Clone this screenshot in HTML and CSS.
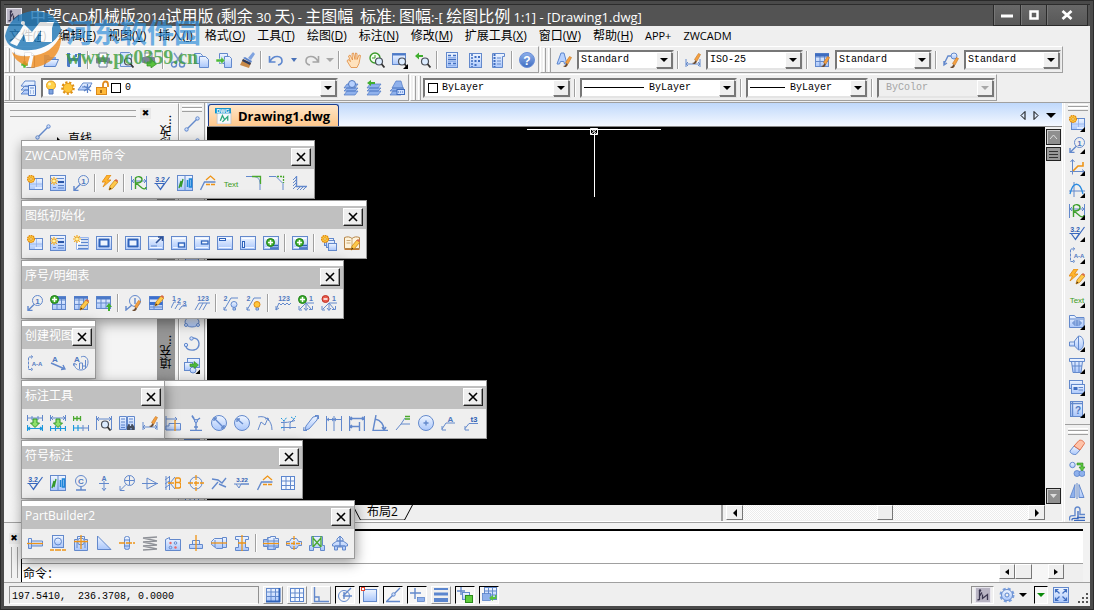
FILE: index.html
```html
<!DOCTYPE html>
<html lang="zh-CN">
<head>
<meta charset="utf-8">
<title>中望CAD机械版2014 - [Drawing1.dwg]</title>
<link rel="stylesheet" href="styles.css">
</head>
<body>
<svg class="paints" aria-hidden="true">
<linearGradient id="gb" x1="0" y1="0" x2="0" y2="1"><stop offset="0" stop-color="#f0f6ff"/><stop offset="1" stop-color="#a9c6fb"/></linearGradient>
<linearGradient id="gd" x1="0" y1="0" x2="0" y2="1"><stop offset="0" stop-color="#8fb1ec"/><stop offset="1" stop-color="#3f6dc0"/></linearGradient>
</svg>
<svg class="sprite" aria-hidden="true">
<defs>
<g id="gear"><circle cx="4" cy="4" r="3.4" fill="#ffc83c" stroke="#e08a10" stroke-width="1.4" stroke-dasharray="1.6 .6"/><circle cx="4" cy="4" r="1.3" fill="#fff0b0" stroke="#d88a10" stroke-width=".8"/></g>
<g id="burst"><path d="M4 0v8M0 4h8M1.2 1.2l5.6 5.6M6.8 1.2L1.2 6.8" stroke="#f2a81c" stroke-width="1.2"/><circle cx="4" cy="4" r="1.6" fill="#fff3a0"/></g>
<g id="pencil"><path d="M7 15l1-4 5-6 3 2-5.500 6.500z" fill="#ffc94a" stroke="#c98414" stroke-width=".8"/><path d="M7 15l1-2.500 1.500 1z" fill="#503010"/><path d="M12.500 5.500l1.500-1.500 2 1.500-1 1.500z" fill="#d86a4a"/></g>
<g id="brush"><path d="M7 13c2 0 3-1 3-3l2 1.500c-1 2.500-3 3.500-5 1.500z" fill="#6a4a30"/><path d="M9.500 9.500l4-6 2 1-3.500 6.500z" fill="#f5a040" stroke="#c27420" stroke-width=".6"/></g>
<g id="plus"><circle cx="4.500" cy="4.500" r="4" fill="#3fae2e" stroke="#1d7d17"/><path d="M4.500 2v5M2 4.500h5" stroke="#fff" stroke-width="1.500"/></g>
<g id="lens"><circle cx="10" cy="9.500" r="3.500" fill="#dcecff" stroke="#4a4f58" stroke-width="1.200"/><path d="M12.500 12l3 3.500" stroke="#333" stroke-width="1.800"/></g>
<g id="corner"><path d="M16 11.500V16h-4.500z" fill="#000"/></g>
<g id="fr"><rect x=".5" y="1.500" width="15" height="13" class="f"/><path d="M2 3.500h12M2 12.500h12" stroke="#fff" stroke-width=".8"/></g>
<g id="grid"><rect x="1.500" y="1.500" width="13" height="13" class="f"/><path d="M1.500 5h13M1.500 9.500h13M6 1.500v13M10.500 1.500v13" class="s"/></g>
</defs>
<symbol id="logo" viewBox="0 0 16 16"><rect width="16" height="16" fill="#b9b5c4"/><rect x=".5" y=".5" width="15" height="15" fill="none" stroke="#e8e6ee"/><path d="M4.500 4v8.500l-2 .5M4.500 9l2.500-3.500M7.500 7.500v4l5-4v5.500" fill="none" stroke="#3b3750" stroke-width="1.300"/><circle cx="5" cy="3.500" r="1.200" fill="#3b3750"/></symbol>
<symbol id="new" viewBox="0 0 16 16"><path d="M4.500.5h7l3 3v12h-10z" fill="#f7fbff" stroke="#8c8f9c"/><path d="M11.500.5v3h3" fill="none" stroke="#8c8f9c"/><path d="M3 9h3v2h2v3H6v2H3v-2H1v-3h2z" fill="#4cb93a" stroke="#fff" stroke-width=".5"/></symbol>
<symbol id="open" viewBox="0 0 16 16"><path d="M1 14V3h5l1 2h6v9z" fill="#7ea6e8"/><path d="M1 14.500l3-7h11.500l-3 7z" fill="url(#gb)" stroke="#5a82c8"/></symbol>
<symbol id="save" viewBox="0 0 16 16"><path d="M1 1h14v14H2l-1-1z" fill="#4b79c8"/><path d="M4 1h8v5H4zM4 9h8v6H4z" fill="#eaf2ff"/><path d="M9 2h2v3H9z" fill="#4b79c8"/></symbol>
<symbol id="print" viewBox="0 0 16 16"><path d="M4 1h8v5H4z" fill="#fff" stroke="#7f8798"/><rect x="1" y="5.500" width="14" height="6" rx="1" fill="#7b8496"/><path d="M4 9.500h8V15H4z" fill="#f4f8ff" stroke="#6d7790"/></symbol>
<symbol id="preview" viewBox="0 0 16 16"><path d="M2.500.5h9l2 2v12h-11z" fill="#d6e5ff" stroke="#6c8fd0"/><use href="#lens"/></symbol>
<symbol id="publish" viewBox="0 0 16 16"><path d="M4 1h7v4H4z" fill="#fff" stroke="#7f8798"/><rect x="1" y="5" width="13" height="6" rx="1" fill="#7b8496"/><path d="M6 10h4V7.500l5.500 4.500-5.500 4V14H6z" fill="#59c23d" stroke="#2f8c1e" stroke-width=".7"/></symbol>
<symbol id="cut" viewBox="0 0 16 16"><path d="M4 1l6 9M12 1L6 10" stroke="#7b98cc" stroke-width="1.500"/><circle cx="4" cy="12.500" r="2.500" class="s w"/><circle cx="12" cy="12.500" r="2.500" class="s w"/></symbol>
<symbol id="copy" viewBox="0 0 16 16"><path d="M1.500 1.500h6l2 2v8h-8z" class="f"/><path d="M6.500 4.500h6l3 3v8h-9z" class="f"/></symbol>
<symbol id="paste" viewBox="0 0 16 16"><path d="M3.500 1.500h8v10h-8z" class="f"/><path d="M8.500 4.500h5l2 2v9h-7z" class="f"/><path d="M0 7h5V4.500L9 8.500l-4 4V10H0z" fill="#4cb93a" stroke="#fff" stroke-width=".5"/></symbol>
<symbol id="match" viewBox="0 0 16 16"><path d="M14 0l2 2-4 6-3-2z" fill="#7fa3e0"/><path d="M4 6l2-1 7 4-1 2z" fill="#5f86cc"/><path d="M4 7l8 4-2 5-9-3z" fill="#c98a48"/><path d="M4 7l8 4-1 2-8-4z" fill="#2d3c60"/></symbol>
<symbol id="undo" viewBox="0 0 16 16"><path d="M1.500 4v6h6M2 9.500C6 2 14 4 14 9c0 2-1.500 3.500-4 4" fill="none" stroke="#5d87cf" stroke-width="1.600"/></symbol>
<symbol id="redo" viewBox="0 0 16 16"><path d="M14.500 4v6h-6M14 9.500C10 2 2 4 2 9c0 2 1.500 3.500 4 4" fill="none" stroke="#a5a5a5" stroke-width="1.600"/></symbol>
<symbol id="hand" viewBox="0 0 16 16"><path d="M5 15.500L1 9l1-1.500 2.500 2L2.500 4 4 3l2.500 5L6 1.500 7.500 1 9 7.500l.5-6.500L11 1.500v6L13 3l1.500.5-1.500 8-2 4z" fill="#ffe2bd" stroke="#e08a3c" stroke-width=".8"/></symbol>
<symbol id="zrt" viewBox="0 0 16 16"><circle cx="6" cy="6" r="5" fill="#f4fff0" stroke="#3a9a2a" stroke-width="1.400"/><path d="M6 3v3H3" fill="none" stroke="#3a9a2a"/><use href="#lens"/></symbol>
<symbol id="zwin" viewBox="0 0 16 16"><rect x=".5" y="1.500" width="13" height="11" class="f"/><path d="M.5 2.500h13" stroke="#4b79c8" stroke-width="2"/><use href="#lens"/></symbol>
<symbol id="zprev" viewBox="0 0 16 16"><path d="M0 4l4-3.500V3h4v2H4v2.500z" fill="#3fae2e"/><use href="#lens"/></symbol>
<symbol id="prop" viewBox="0 0 16 16"><rect x="2.500" y=".5" width="11" height="15" class="f"/><path d="M4 3.500h3M9 3.500h3M4 11.500h3M9 11.500h3M4 7.500h8" stroke="#3f6dc0" stroke-width="1.500"/><path d="M4 5.500h8M4 13.500h8M4 9.500h8" stroke="#8fb0ec"/></symbol>
<symbol id="dcenter" viewBox="0 0 16 16"><rect x="2.500" y="1.500" width="12" height="14" class="f"/><path d="M5 2v13" stroke="#3f6dc0" stroke-width="1.500" stroke-dasharray="2 1"/><path d="M7.500 4h2v2h-2zM11 4h2v2h-2zM7.500 8h2v2h-2zM11 8h2v2h-2zM7.500 12h2v2h-2z" fill="#3f6dc0"/></symbol>
<symbol id="palette" viewBox="0 0 16 16"><path d="M2.500 1.500h12v3h-2v11h-10z" class="f"/><path d="M4.500 2v13" stroke="#3f6dc0" stroke-width="2" stroke-dasharray="2 1"/><path d="M7 6h4M7 9h4M7 12h4" class="s"/></symbol>
<symbol id="help" viewBox="0 0 16 16"><circle cx="8" cy="8" r="7.500" fill="url(#gd)" stroke="#6c8fd8"/><text x="8" y="12.500" class="tx tw" font-size="12">?</text></symbol>
<symbol id="stext" viewBox="0 0 16 16"><path d="M1 12L5 1h3l3 11H8.500l-.7-2.500H4.500L3.500 12z" fill="#b7d1ff" stroke="#5b86cf"/><use href="#brush" y="1"/></symbol>
<symbol id="sdim" viewBox="0 0 16 16"><path d="M1 7v8M15 7v8M1 12h14M3 10l-2 2 2 2M13 10l2 2-2 2" class="s"/><use href="#brush" y="-2"/></symbol>
<symbol id="stab" viewBox="0 0 16 16"><use href="#grid"/><path d="M1 3h14" stroke="#3f6dc0" stroke-width="3"/><use href="#brush" y="1"/></symbol>
<symbol id="slead" viewBox="0 0 16 16"><circle cx="11" cy="4" r="3" class="f"/><path d="M8 4H5L1 12M1 9v4l3-2" class="s w"/><use href="#brush" y="2"/></symbol>
<symbol id="layers" viewBox="0 0 16 16"><path d="M1 6l4-5h10v4L11 7zM1 10l4-4h10L12 10zM1 14l4-4h10l-3 4z" class="f"/><path d="M8.500 5.500h7v10h-7z" fill="#e6f0ff" stroke="#4b74c0"/><path d="M10 8h4M10 11h1M13 11h1M10 13h1M13 13h1" class="s"/></symbol>
<symbol id="bulb" viewBox="0 0 16 16"><circle cx="8" cy="5.500" r="4.500" fill="#ffd24a" stroke="#e79a1b"/><path d="M6 9.500h4V14H6z" fill="#7ea3e0" stroke="#5279bd"/><circle cx="6.500" cy="4" r="1.500" fill="#fff5c0"/></symbol>
<symbol id="sun" viewBox="0 0 16 16"><circle cx="8" cy="8" r="5.500" fill="none" stroke="#dd8f12" stroke-width="2.500" stroke-dasharray="2.100 1.670"/><circle cx="8" cy="8" r="4.700" fill="#ffc63a" stroke="#e59b1a"/></symbol>
<symbol id="frz" viewBox="0 0 16 16"><path d="M1 10l5-7h9l-4 7z" class="f"/><path d="M5 7h6M10.500 4v9M7 6l7 5M14 6l-7 5" stroke="#5b82c8" stroke-width="1.200"/></symbol>
<symbol id="lock" viewBox="0 0 16 16"><path d="M9 8V4.500c0-4 5-4 5 0V7" fill="none" stroke="#e08a1c" stroke-width="1.800"/><rect x="2.500" y="7.500" width="10" height="7" fill="#ffb93a" stroke="#dc8818"/><path d="M7 10v3" stroke="#8d5406" stroke-width="1.500"/></symbol>
<symbol id="lay1" viewBox="0 0 16 16"><path d="M1 8l3-4h11l-3 4zM1 11l3-3h11l-3 3zM1 15l3-4h11l-3 4z" class="fl"/><circle cx="9" cy="4" r="3.500" fill="#b7d1ff" stroke="#5279bd"/></symbol>
<symbol id="lay2" viewBox="0 0 16 16"><path d="M1 8l3-4h11l-3 4zM1 11l3-3h11l-3 3zM1 15l3-4h11l-3 4z" class="fl"/><path d="M1 3l4-3v2h4v2H5v2z" fill="#3fae2e"/></symbol>
<symbol id="lay3" viewBox="0 0 16 16"><path d="M3 8l4-7h5l2 7zM1 11l3-3h11l-3 3zM1 15l3-4h11l-3 4z" class="fl"/><rect x="8" y="9.500" width="7.500" height="5" fill="#cfe0ff" stroke="#3f6dc0"/><path d="M9 12h5" stroke="#3f6dc0" stroke-dasharray="1 1"/></symbol>
<symbol id="dwg" viewBox="0 0 16 16"><path d="M2 2h10l3 3v11H2z" fill="#f5f8fc" stroke="#b8c1ce" stroke-width=".7"/><path d="M5 13l2-5 2 4 3-3v4M7 14l4-4" fill="none" stroke="#2aa87c" stroke-width="1.200"/><rect y="1" width="15" height="5" fill="#0e91cb"/><text x="7.500" y="5.400" class="tx tw" font-size="5">DWG</text></symbol>
<symbol id="line" viewBox="0 0 16 16"><path d="M3 13L13 3" class="s w"/><circle cx="2.500" cy="13.500" r="1.700" class="f"/><circle cx="13.500" cy="2.500" r="1.700" class="f"/></symbol>
<symbol id="ellipse" viewBox="0 0 16 16"><ellipse cx="8" cy="8" rx="7" ry="5" class="f"/><circle cx="2" cy="11" r="1.500" class="f"/><circle cx="14" cy="11" r="1.500" class="f"/></symbol>
<symbol id="arc" viewBox="0 0 16 16"><path d="M8 2c9-1 9 11 2 12-4 .5-7-1-8-3" class="s w"/><circle cx="7.500" cy="2.500" r="1.700" class="f"/><circle cx="2" cy="9" r="1.700" class="f"/></symbol>
<symbol id="insert" viewBox="0 0 16 16"><rect x="3.500" y=".5" width="12" height="9" class="f"/><rect x=".5" y="4.500" width="8" height="8" class="f"/><circle cx="9" cy="12" r="3" class="f"/><path d="M6 6h4V3.500l4.500 3.500-4.500 3.500V8.500H6z" fill="#4cb93a" stroke="#2f8c1e" stroke-width=".6"/><use href="#corner"/></symbol>
<symbol id="sheetgear" viewBox="0 0 16 16"><rect x="2.500" y="3.500" width="13" height="11" class="f"/><path d="M9.500 4v10M3 9h12" stroke="#8fb0ec" stroke-width=".8"/><path d="M8 12h7v2H8z" fill="#dfeaff"/><use href="#gear"/></symbol>
<symbol id="sheetsun" viewBox="0 0 16 16"><rect x=".5" y=".5" width="15" height="15" class="f"/><path d="M7 3.500h7M3 12.500h3" class="s"/><path d="M8 7h6" stroke="#2b56a8" stroke-width="2"/><path d="M8 10.500h6M8 13h6" stroke="#5b82c8" stroke-width="1.200"/><use href="#burst" y="2"/></symbol>
<symbol id="listsun" viewBox="0 0 16 16"><path d="M3.500 2.500h12v12h-12z" fill="#fff" stroke="#9bb8ee"/><path d="M8 4.500h7M8 7.500h7M5 10.500h10M5 13.500h10" stroke="#5b86cf" stroke-width="1.400"/><use href="#burst"/></symbol>
<symbol id="balloon" viewBox="0 0 16 16"><circle cx="10.500" cy="5.500" r="5" class="s"/><text x="10.500" y="8.500" class="tx" font-size="8">1</text><path d="M7 9.500L1.500 15M1 11v4.500h4.500" class="s w"/></symbol>
<symbol id="bolt" viewBox="0 0 16 16"><path d="M5 0L0 7h3.500L1 12l8-7H5.500L9 0z" fill="#ffb52e" stroke="#df8610" stroke-width=".8"/><use href="#pencil"/></symbol>
<symbol id="fit" viewBox="0 0 16 16"><path d="M.5 1v14M15.500 1v14M1 6h14M3 4L1 6l2 2M13 4l2 2-2 2" class="s"/><path d="M4.500 14V3C6 1 11 1 11 4.500S6 8 5 8l6 5c2 1.500 4 1 4-1" fill="none" stroke="#3fa02e" stroke-width="1.400"/></symbol>
<symbol id="rough" viewBox="0 0 16 16"><text x="6" y="6.500" class="tx td" font-size="7">3.2</text><path d="M.5 8.500h10M2.500 9l4 5.500L15.500 2M6.500 14L10 9" fill="none" stroke="#3a68bd" stroke-width="1.200"/></symbol>
<symbol id="hatch" viewBox="0 0 16 16"><rect x=".5" y=".5" width="15" height="15" class="f"/><path d="M8 1v14" class="s"/><path d="M2 13l2-7v6l2-8" fill="none" stroke="#35992b" stroke-width="1.300"/><path d="M10.500 5v7M12.500 4h2v8h-2z" fill="none" stroke="#1f86d8" stroke-width="1.500"/></symbol>
<symbol id="weld" viewBox="0 0 16 16"><path d="M.5 15l4-8h11" class="s w"/><path d="M6 5l4.500-4L15 5" class="o"/><path d="M6 9.500h4M11 9.500h4" class="o"/></symbol>
<symbol id="text" viewBox="0 0 16 16"><text x="8" y="11.500" font-size="8" class="tg">Text</text></symbol>
<symbol id="fillet" viewBox="0 0 16 16"><path d="M0 1.500h7c5 0 7 3 7 7V15" class="s"/><path d="M6 1.500h8.500V9" class="g"/></symbol>
<symbol id="chamfer" viewBox="0 0 16 16"><path d="M0 1.500h7l7 7V15" class="s"/><path d="M8 1.500h6.500V8" class="g" stroke-dasharray="2 1"/></symbol>
<symbol id="slot" viewBox="0 0 16 16"><path d="M4.500 1v10.500H15" class="s w"/><path d="M1 5l3-3M1 8l3-3M1 11l3-3M1 14l3-3M5 15l3-3M8 15l3-3M11 15l3-3" class="s"/></symbol>
<symbol id="frame" viewBox="0 0 16 16"><use href="#fr"/><rect x="3.500" y="4.500" width="9" height="7" fill="#eef5ff" stroke="#2f63bb" stroke-width="2"/></symbol>
<symbol id="framearrow" viewBox="0 0 16 16"><use href="#fr"/><path d="M8 8l6-6M10 2h4.500v4" fill="none" stroke="#2f5296" stroke-width="1.600"/><path d="M3 11h6" class="s"/></symbol>
<symbol id="framebr" viewBox="0 0 16 16"><use href="#fr"/><rect x="7.500" y="8" width="6" height="4" fill="#f2f7ff" stroke="#2f63bb" stroke-width="1.400"/></symbol>
<symbol id="framer" viewBox="0 0 16 16"><use href="#fr"/><rect x="7.500" y="6" width="6.500" height="3" fill="#f2f7ff" stroke="#2f63bb" stroke-width="1.300"/></symbol>
<symbol id="frametl" viewBox="0 0 16 16"><use href="#fr"/><rect x="2.500" y="3.500" width="6" height="2" fill="#f2f7ff" stroke="#2f63bb"/></symbol>
<symbol id="framel" viewBox="0 0 16 16"><use href="#fr"/><rect x="2.500" y="6.500" width="2" height="6" fill="#f2f7ff" stroke="#2f63bb"/></symbol>
<symbol id="frameplus" viewBox="0 0 16 16"><use href="#fr"/><path d="M7 10.500h8M7 13h8" stroke="#2f63bb" stroke-width="1.500"/><use href="#plus" x="3" y="3"/></symbol>
<symbol id="sheets" viewBox="0 0 16 16"><rect x="3.500" y="3.500" width="9" height="7" class="f"/><rect x="5.500" y="5.500" width="8" height="7" class="f"/><rect x="7.500" y="8.500" width="8" height="7" class="f"/><use href="#gear"/></symbol>
<symbol id="book" viewBox="0 0 16 16"><path d="M.5 2.500c3-1 5-1 7.500 1 2.500-2 4.500-2 7.500-1v11H.5z" fill="#fdf3dc" stroke="#b68446"/><path d="M8 3v10M2.500 5.500h4M2.500 8h4" stroke="#c8a878"/><path d="M.5 14.500h15" stroke="#c17a35"/><use href="#pencil"/></symbol>
<symbol id="tabplus" viewBox="0 0 16 16"><use href="#grid" x="1" y="0"/><path d="M2 3h14" stroke="#4b79c8" stroke-width="2.500"/><use href="#plus" y="0"/></symbol>
<symbol id="tabpen" viewBox="0 0 16 16"><use href="#grid"/><path d="M1 2.500h14" stroke="#4b79c8" stroke-width="2.500"/><use href="#pencil"/></symbol>
<symbol id="tabup" viewBox="0 0 16 16"><rect x=".5" y="1.500" width="14" height="12" class="f"/><path d="M.5 3h14" stroke="#4b79c8" stroke-width="3"/><path d="M.5 8h14M5 4v9M10 4v9" class="s"/><path d="M10 12l3-4 3 4h-2v4h-2v-4z" fill="#3fae2e"/></symbol>
<symbol id="balbrush" viewBox="0 0 16 16"><circle cx="10" cy="6" r="5.500" class="s"/><path d="M10 3v6M7 10L1 15v-4" class="s w"/><use href="#brush" y="2"/></symbol>
<symbol id="tabpen2" viewBox="0 0 16 16"><rect x="1.500" y="1.500" width="13" height="13" class="f"/><path d="M1.500 3h13M1.500 8.500h13" stroke="#3a6fce" stroke-width="3"/><path d="M1.500 12h13M6 10v4" class="s"/><use href="#pencil" y="-4"/></symbol>
<symbol id="n123a" viewBox="0 0 16 16"><text x="3" y="5.500" class="tx" font-size="7">1</text><text x="8" y="8" class="tx" font-size="7">2</text><text x="13.500" y="11" class="tx" font-size="7">3</text><path d="M0 13l3-6h2M4 14l3-5h3M8 15l3-4h5" class="s"/></symbol>
<symbol id="n123b" viewBox="0 0 16 16"><text x="9" y="6" class="tx" font-size="7">123</text><path d="M1 15l4-7h11M5 15l4-7M9 15l4-7" class="s"/></symbol>
<symbol id="bulboff" viewBox="0 0 16 16"><text x="2.500" y="6" class="tx" font-size="7">2</text><path d="M1 15L8 3h7M1 12v3h3" class="s"/><circle cx="11" cy="9.500" r="3" class="f"/><path d="M10 13h2.500v2H10z" class="f"/></symbol>
<symbol id="bulbon" viewBox="0 0 16 16"><text x="2.500" y="6" class="tx" font-size="7">2</text><path d="M1 15L8 3h7M1 12v3h3" class="s"/><circle cx="11" cy="9.500" r="3" fill="#ffc63a" stroke="#de8a14"/><path d="M10 13h2.500v2H10z" class="f"/></symbol>
<symbol id="n123z" viewBox="0 0 16 16"><text x="9" y="6" class="tx" font-size="7">123</text><path d="M1 15L4 8l2 2 2-2 2 2 2-2 2 2 2-2M1 11v4l3-2" class="s"/></symbol>
<symbol id="plus1" viewBox="0 0 16 16"><text x="13" y="6" class="tx" font-size="7">1</text><path d="M8 8h8M8 8l-6 6M8 8v7M8 8l5 6M1 11v4h3M6 13l2 2.500 2-2.500M11 14.500h3.500V11" class="s"/><use href="#plus"/></symbol>
<symbol id="minus1" viewBox="0 0 16 16"><text x="13" y="6" class="tx" font-size="7">1</text><path d="M8 8h8M8 8l-6 6M8 8v7M8 8l5 6M1 11v4h3M6 13l2 2.500 2-2.500M11 14.500h3.500V11" class="s"/><circle cx="4.500" cy="4" r="3.500" fill="#e85a4a" stroke="#c03226"/><path d="M2.500 4h4" stroke="#fff" stroke-width="1.500"/></symbol>
<symbol id="aa" viewBox="0 0 16 16"><path d="M5 2H1.500v12.500H5M4 .5L6 2 4 3.500M4 13l2 1.500L4 16" class="s" stroke-dasharray="3 1"/><text x="10" y="10.500" class="tx" font-size="6">A-A</text></symbol>
<symbol id="aview" viewBox="0 0 16 16"><text x="5" y="7" class="tx" font-size="8">A</text><path d="M1 8l14 6M11 14.500l4-.5-2-4" class="s w"/></symbol>
<symbol id="arot" viewBox="0 0 16 16"><text x="4" y="7" class="tx" font-size="8">A</text><path d="M8 2c4-2 7 1 7 5 0 5-3 8-7 8-4 0-6-2-7-6M0 11l1-3 3 2" class="s"/><path d="M6.500 14V8h3v6M9.500 11h3V5M12.500 6v7" class="s"/></symbol>
<symbol id="dimdown" viewBox="0 0 16 16"><path d="M.5 0v6M15.500 0v6M5 1v4M11 1v4M.5 3h15" class="s"/><path d="M.5 10v6M15.500 10v6M.5 13.500h15M3 12l-2 1.500L3 15M13 12l2 1.500-2 1.500" fill="none" stroke="#1b97dd" stroke-width="1.200"/><path d="M6 4h4v4h2.500L8 12.500 3.500 8H6z" fill="#8fe06a" stroke="#32962a"/></symbol>
<symbol id="dimdown2" viewBox="0 0 16 16"><path d="M.5 0v6M15.500 0v6M.5 3h15M3 1L1 3l2 2M13 1l2 2-2 2" class="s"/><path d="M.5 11v5M5.500 11v5M10.500 11v5M15.500 11v5M.5 13.500h15" fill="none" stroke="#1b97dd" stroke-width="1.200"/><path d="M6 4h4v4h2.500L8 12.500 3.500 8H6z" fill="#8fe06a" stroke="#32962a"/></symbol>
<symbol id="dimgrn" viewBox="0 0 16 16"><path d="M.5 1v5M4 1v5M7.500 1v5M.5 3.500h7" class="g"/><path d="M.5 10v6M5 10v6M.5 13h8" fill="none" stroke="#1b97dd" stroke-width="1.200"/><path d="M15.500 10v6M10 10v6M8 13h7" class="s"/></symbol>
<symbol id="dimlens" viewBox="0 0 16 16"><path d="M.5 1v14M15.500 1v14M1 4h14M3 2L1 4l2 2M13 2l2 2-2 2" class="s"/><use href="#lens" x="-1"/></symbol>
<symbol id="bookfind" viewBox="0 0 16 16"><path d="M.5 1.500h7v13h-7zM8.500 1.500h7v13h-7z" class="f"/><path d="M2 4h4M2 7h4M2 10h4M2 12.500h4M10 4h4M10 7h4" stroke="#5b82c8"/><path d="M8 15v-3l1.500-3h1l.5 2h1l.5-2h1l2 3v3h-3v-2h-1v2z" fill="#444c5c"/></symbol>
<symbol id="dimblock" viewBox="0 0 16 16"><path d="M1 15V1M1 4h11M10 2l2 2-2 2" class="s"/><path d="M4 8.500h11.500V15H1v-4h3z" class="f"/><path d="M10 5v11" class="o"/></symbol>
<symbol id="datum" viewBox="0 0 16 16"><path d="M2 15.500h12M8 15V7L4 1M4 .5l2 3M8 6l4-3M6 12h4" class="s w"/><circle cx="8" cy="6" r="1.500" class="f"/></symbol>
<symbol id="diam" viewBox="0 0 16 16"><circle cx="8" cy="8" r="7.500" class="f"/><path d="M3 3l10 10M3 6V3h3M13 10v3h-3" class="s w"/></symbol>
<symbol id="radius" viewBox="0 0 16 16"><circle cx="8" cy="8" r="7.500" class="f"/><path d="M3 4l6 5M3 7V4h3" class="s w"/></symbol>
<symbol id="jog" viewBox="0 0 16 16"><path d="M1 2c8-2 14 4 14 13M1 15l3-8 4 3 3-7M8 4l3-1 1 3" class="s"/></symbol>
<symbol id="ord" viewBox="0 0 16 16"><path d="M4 16V5M1 12.500h15M1 7.500c5 0 8 0 14-2M10 14V8l4-4" class="s"/><path d="M1 3l3 3 3-4M11 2l3 2 2-3M1 13l3-1" fill="none" stroke="#1b97dd" stroke-dasharray="2 1"/></symbol>
<symbol id="align" viewBox="0 0 16 16"><path d="M3 11l7-9 5-1-1 4-8 9-4 1z" class="f"/><path d="M1 12l-.5 3.500H4M12 .5h3.500V4" class="s"/></symbol>
<symbol id="cont" viewBox="0 0 16 16"><path d="M.5 1v15M8 1v15M15.500 1v15M1 4.500h15M3 3L1 4.500 3 6M6 3l2 1.500L6 6M10 3L8 4.500 10 6" class="s"/></symbol>
<symbol id="base" viewBox="0 0 16 16"><path d="M.5 1v15M15.500 1v15M10.500 7v9M1 3.500h14M1 11.500h9M3 2L1 3.500 3 5M13 2l2 1.500L13 5M3 10l-2 1.500L3 13" class="s w"/></symbol>
<symbol id="angle" viewBox="0 0 16 16"><path d="M4 0L1 15.500h15M3 4c6 1 9 6 9 11M10 12l2 3 2-3" class="s w"/></symbol>
<symbol id="leadg" viewBox="0 0 16 16"><path d="M1 15l5-6h9M6 9l4-6" class="s"/><path d="M10 1.500h5M10 4h5" class="g"/></symbol>
<symbol id="cmark" viewBox="0 0 16 16"><circle cx="8" cy="8" r="7.500" class="f"/><path d="M8 5.500v5M5.500 8h5" class="s w"/></symbol>
<symbol id="leada" viewBox="0 0 16 16"><text x="9.500" y="6.500" class="tx" font-size="8">A</text><path d="M14 8H5l-4 6M1 11v4h4" class="s"/></symbol>
<symbol id="leadt" viewBox="0 0 16 16"><text x="10" y="6.500" class="tx td" font-size="8">t3</text><path d="M14 8.500H5l-4 5M1 11v4h4" class="s"/></symbol>
<symbol id="cdatum" viewBox="0 0 16 16"><circle cx="8" cy="6" r="5.500" class="s"/><text x="8" y="9" class="tx" font-size="8">C</text><path d="M8 11.500V15M3 15h10" class="s w"/></symbol>
<symbol id="acenter" viewBox="0 0 16 16"><text x="8" y="6" class="tx" font-size="7">A</text><path d="M3 8.500h10M8 6v9.500M6 13l2 2.500 2-2.500" class="s"/></symbol>
<symbol id="baltarget" viewBox="0 0 16 16"><circle cx="10.500" cy="5.500" r="5" class="s"/><path d="M10.500 1v9M5.500 5.500h10M7 9.500L1.500 15M1 11v4.500h4.500" class="s"/></symbol>
<symbol id="taper" viewBox="0 0 16 16"><path d="M0 8.500h16M5 3v11l10-5.500z" class="s"/></symbol>
<symbol id="kb" viewBox="0 0 16 16"><path d="M1 1v14M4.500 1v14M0 5l4-3M0 9l4-3M0 13l4-3M10 2L5 8l5 6" class="s"/><path d="M10.500 3H14c2 0 2 4.500 0 4.500h-3.500M14 7.500c2.500 0 2.500 5.500 0 5.500h-3.500V3M3 8h6" class="o"/></symbol>
<symbol id="target" viewBox="0 0 16 16"><circle cx="8" cy="8" r="6" class="s"/><path d="M8 0v16M0 8h16" class="o" stroke-dasharray="5 1"/></symbol>
<symbol id="rod" viewBox="0 0 16 16"><path d="M1 4l6 1 4 3 4-5M1 14l6-7M8 9l7 3" class="s w"/></symbol>
<symbol id="n322" viewBox="0 0 16 16"><text x="8" y="7" class="tx td" font-size="6">3.22</text><path d="M0 9h15M2 9l3 4 2-4h8" class="s"/></symbol>
<symbol id="gridb" viewBox="0 0 16 16"><rect x="1.500" y="1.500" width="13" height="13" fill="#f4f8ff" stroke="#5b86cf"/><path d="M1.500 6h13M1.500 10.500h13M6 1.500v13M10.500 1.500v13" class="s"/></symbol>
<symbol id="bolt2" viewBox="0 0 16 16"><path d="M1.500 3.500h3v10h-3zM4.500 6h11v5h-11z" class="f"/><path d="M0 8.500h16" class="o"/></symbol>
<symbol id="bearing" viewBox="0 0 16 16"><rect x="2.500" y=".5" width="11" height="12" class="f"/><circle cx="8" cy="6.500" r="3.500" class="f"/><path d="M0 15h4M5 15h6M12 15h4" class="o"/></symbol>
<symbol id="bush" viewBox="0 0 16 16"><path d="M1.500 4.500h3v-3h7v3h3v11h-13z" class="f"/><path d="M4 6v7M12 6v7" class="s"/><circle cx="8" cy="6.500" r="3.500" class="s"/><path d="M8 0v14M1 6.500h14" class="o"/></symbol>
<symbol id="tri" viewBox="0 0 16 16"><path d="M1.500 1v13.500H15z" class="f"/></symbol>
<symbol id="washer" viewBox="0 0 16 16"><rect x="5.500" y="1.500" width="5" height="13" rx="2" class="f"/><path d="M5 5h6M5 11h6" class="s"/><path d="M0 8h16" class="o" stroke-dasharray="6 1"/></symbol>
<symbol id="spring" viewBox="0 0 16 16"><path d="M1 3l14-1M1 3l14 3M1 7l14-1M1 7l14 3M1 11l14-1M1 11l14 3M1 15l14-1" stroke="#8f9298" stroke-width="1.400"/></symbol>
<symbol id="steel" viewBox="0 0 16 16"><path d="M.5 4.500l4-2v2h11v11H.5z" class="f"/><circle cx="5.500" cy="8" r="1.200" fill="#e66"/><circle cx="10.500" cy="8" r="1.300" class="s"/><circle cx="5.500" cy="12.500" r="1.300" class="s"/><circle cx="10.500" cy="12.500" r="1.200" fill="#e66"/></symbol>
<symbol id="nut" viewBox="0 0 16 16"><path d="M4.500 5.500h7v4h-7zM1.500 9.500h13v4h-13z" class="f"/><path d="M8 0v16" class="o"/></symbol>
<symbol id="plug" viewBox="0 0 16 16"><path d="M.5 6.500l3-3h8v-1h4v10h-4v1h-6l-5-4z" class="f"/><path d="M4 5v7M11.500 3v10" class="s"/><path d="M0 8h16" class="o"/></symbol>
<symbol id="ibeam" viewBox="0 0 16 16"><path d="M1.500 1.500h13v3h-3v8h3v3h-13v-3h3v-8h-3z" class="f"/><path d="M8 0v16M4 8h8" class="o"/></symbol>
<symbol id="flange" viewBox="0 0 16 16"><path d="M.5 4.500h4v-2h3v-1h5v2h3v9h-3v2h-8v-3h-4z" class="f"/><path d="M5 3v11M11 3v11M1 6h14M1 11h14" class="s"/><path d="M0 8.500h16" class="o"/></symbol>
<symbol id="gearbox" viewBox="0 0 16 16"><path d="M.5 6.500h3l2-3h5l2 3h3v4h-3l-2 3h-5l-2-3h-3z" class="f"/><path d="M8 1v14M0 8.500h16" class="o" stroke-dasharray="4 1"/></symbol>
<symbol id="green" viewBox="0 0 16 16"><path d="M2.500 1.500h11v9h2v5h-4v-3h-7v3h-4v-5h2z" class="f"/><path d="M4 3l8 9M12 3l-8 9M4 1v11M12 1v11" class="g"/></symbol>
<symbol id="hub" viewBox="0 0 16 16"><path d="M5 4l3-3 3 3v2l4.500 3v2h-2v4h-3v-3h-5v3h-3v-4H.5V9L5 6z" class="f"/><path d="M8 1v11M5 6h6M3 11h10" class="s w"/></symbol>
<symbol id="axis" viewBox="0 0 16 16"><path d="M3.500 1v14.500M1 12.500h14M1.500 3l2-2.500 2 2.500M13 10.500l2.500 2-2.500 2" class="s"/><path d="M4 12l5-5h5V3" fill="none" stroke="#ee9416" stroke-width="1.600"/></symbol>
<symbol id="curve" viewBox="0 0 16 16"><path d="M5 1v15M0 10h16" class="s"/><path d="M1 13C4 0 11 0 14 13" fill="none" stroke="#2b8be0" stroke-width="1.300"/></symbol>
<symbol id="folder" viewBox="0 0 16 16"><path d="M.5 14.500v-12h5l1.500 2h8v10z" class="f"/><path d="M.5 6h14M3 10h10M5 8v4h6V8H5M8 7v6" class="s"/></symbol>
<symbol id="cap" viewBox="0 0 16 16"><path d="M.5 7h5v4h-5z" class="f"/><path d="M5.500 6l4-5c4 0 5 4 5 7s-1 7-5 7l-4-4z" class="f"/><path d="M9.500 1v14" class="s"/></symbol>
<symbol id="bin" viewBox="0 0 16 16"><path d="M2.500 4.500h11l-1.500 11H4zM.5 1.500h15v3H.5z" class="f"/><path d="M6 5v10M10 5v10M3 9h10" class="s"/></symbol>
<symbol id="cards" viewBox="0 0 16 16"><rect x=".5" y="1.500" width="13" height="8" class="f"/><rect x="2.500" y="5.500" width="13" height="9" class="f"/><path d="M4.500 8h4v3h-4z" fill="#3f6dc0"/><path d="M9.500 8.500h4.500M9.500 11h4.500" class="s"/></symbol>
<symbol id="manual" viewBox="0 0 16 16"><rect x="1.500" y=".5" width="12" height="15" class="f"/><path d="M3.500 1v14M1.500 2.500h12" class="s w"/><text x="9" y="12.500" class="tx" font-size="10">?</text></symbol>
<symbol id="eraser" viewBox="0 0 16 16"><path d="M1 12l4-5 6 4-4 4.500c-2 .5-6-1-6-3.500z" class="f"/><path d="M5 7l5-5.500c2-1 5 .5 5.500 3L11 11z" fill="#ffc2a8" stroke="#e0704c"/></symbol>
<symbol id="cpy2" viewBox="0 0 16 16"><circle cx="3.500" cy="4" r="2.700" class="f"/><circle cx="8" cy="12.500" r="3" class="fl"/><circle cx="13" cy="12.500" r="3" class="fl"/><path d="M8 2h6v4h2l-3 4-3-4h2V4H8z" fill="#5cc63f" stroke="#2f8c1e" stroke-width=".6"/></symbol>
<symbol id="mirror" viewBox="0 0 16 16"><path d="M6 1.500v13H1z" class="fl"/><path d="M10 1.500v13h5z" class="f"/><path d="M8 0v16" class="s"/></symbol>
<symbol id="offset" viewBox="0 0 16 16"><path d="M.5 15.500v-2c0-3 2-3 5.500-3V5c0-4 5-4 5 0v4.500h5" class="s w"/><path d="M3 15.500v-1c0-1.500 2-1 6-1V6M16 12.500H8M16 15.500H5" stroke="#3a68bd" fill="none" stroke-width="1.300"/></symbol>
<symbol id="grid2" viewBox="0 0 16 16"><use href="#grid"/><path d="M14.500 1v14" stroke="#2f63bb" stroke-width="2"/><path d="M1 14.500h14" stroke="#2f63bb" stroke-width="2"/></symbol>
<symbol id="ortho" viewBox="0 0 16 16"><path d="M1.500 0v14.500H16M2 10h4v4" class="s w"/></symbol>
<symbol id="polar" viewBox="0 0 16 16"><circle cx="7" cy="9" r="5.500" class="s"/><path d="M6 9h9M6 9l8-8M7 5v7" class="s w"/></symbol>
<symbol id="osnap" viewBox="0 0 16 16"><rect x="2.500" y="2.500" width="13" height="12" class="f"/><rect x=".5" y=".5" width="3" height="3" fill="#fff" stroke="#e8432f"/></symbol>
<symbol id="otrack" viewBox="0 0 16 16"><path d="M1 14.500h14M2 14L15 1" class="s w"/><circle cx="8.500" cy="7.500" r="1.700" class="f"/></symbol>
<symbol id="dyn" viewBox="0 0 16 16"><path d="M6 1v11M1 6h11" class="s w"/><rect x="8.500" y="10.500" width="7" height="4" class="fl"/></symbol>
<symbol id="lwt" viewBox="0 0 16 16"><path d="M1 2h14" stroke="#5b86cf" stroke-width="2"/><path d="M1 7h14" stroke="#5b86cf" stroke-width="3"/><path d="M1 13h14" stroke="#5b86cf" stroke-width="4"/></symbol>
<symbol id="cycle" viewBox="0 0 16 16"><path d="M4 0v8M0 4h8" class="s w"/><rect x="5.500" y="5.500" width="7" height="7" class="f"/><rect x="8.500" y="8.500" width="7" height="7" fill="#5fcc3e" stroke="#2b8a1d"/></symbol>
<symbol id="model" viewBox="0 0 16 16"><rect x="3.500" y=".5" width="12" height="12" class="f"/><path d="M3.500 4h12M7.500.5v12M11.500.5v12M3.500 8h12" class="s"/><rect x="1.500" y="6.500" width="8" height="7" class="fl"/><path d="M15.500 8v4H12v2l-4-3 4-3v2h2V8z" fill="#59c23d"/></symbol>
<symbol id="cog" viewBox="0 0 16 16"><circle cx="8" cy="8" r="6.500" fill="none" stroke="#7ba0de" stroke-width="2" stroke-dasharray="3 2.100"/><circle cx="8" cy="8" r="5.500" class="f"/><circle cx="8" cy="8" r="2" fill="#efefef" stroke="#5b86cf"/></symbol>
<symbol id="full" viewBox="0 0 16 16"><rect x=".5" y=".5" width="15" height="15" class="f"/><path d="M2.500 2.500l4 4M13.500 2.500l-4 4M2.500 13.500l4-4M13.500 13.500l-4-4M2.500 5.500v-3h3M10.500 2.500h3v3M2.500 10.500v3h3M10.500 13.500h3v-3" fill="none" stroke="#3f6dc0" stroke-width="1.200"/></symbol>
</svg>

<div class="window">
  <header class="titlebar">
    <svg class="ic"><use href="#logo"/></svg>
    <h1>中望<span>CAD</span>机械版<span>2014</span>试用版<span> (</span>剩余<span> 30 </span>天<span>) - </span>主图幅<span>&nbsp; </span>标准<span>: </span>图幅<span>:-[ </span>绘图比例<span> 1:1] - [Drawing1.dwg]</span></h1>
    <div class="winbtns">
      <button aria-label="Minimize"><svg viewBox="0 0 14 12"><path d="M1 5.500h12v3H1z" fill="#fff"/></svg></button>
      <button aria-label="Maximize"><svg viewBox="0 0 14 12"><path d="M3.500 2.500h7v7h-7z" fill="none" stroke="#fff" stroke-width="2.500"/></svg></button>
      <button class="wclose" aria-label="Close"><svg viewBox="0 0 14 12"><path d="M2.500 2l9 8M11.500 2l-9 8" stroke="#fff" stroke-width="2.800"/></svg></button>
    </div>
  </header>

  <nav class="menu">
    <button>文件(<u>F</u>)</button><button>编辑(<u>E</u>)</button><button>视图(<u>V</u>)</button><button>插入(<u>I</u>)</button><button>格式(<u>O</u>)</button><button>工具(<u>T</u>)</button><button>绘图(<u>D</u>)</button><button>标注(<u>N</u>)</button><button>修改(<u>M</u>)</button><button>扩展工具(<u>X</u>)</button><button>窗口(<u>W</u>)</button><button>帮助(<u>H</u>)</button><button class="en">APP+</button><button class="en">ZWCADM</button>
  </nav>

  <div class="barrow">
    <div class="bar">
      <i class="grip"></i>
      <button class="t" aria-label="New"><svg><use href="#new"/></svg></button>
      <button class="t" aria-label="Open"><svg><use href="#open"/></svg></button>
      <button class="t" aria-label="Save"><svg><use href="#save"/></svg></button>
      <i class="sep"></i>
      <button class="t" aria-label="Print"><svg><use href="#print"/></svg></button>
      <button class="t" aria-label="Preview"><svg><use href="#preview"/></svg></button>
      <button class="t" aria-label="Publish"><svg><use href="#publish"/></svg></button>
      <i class="sep"></i>
      <button class="t" aria-label="Cut"><svg><use href="#cut"/></svg></button>
      <button class="t" aria-label="Copy"><svg><use href="#copy"/></svg></button>
      <button class="t" aria-label="Paste"><svg><use href="#paste"/></svg></button>
      <button class="t" aria-label="Match properties"><svg><use href="#match"/></svg></button>
      <i class="sep"></i>
      <button class="t" aria-label="Undo"><svg><use href="#undo"/></svg></button>
      <button class="drop" aria-label="Undo list"><i class="down blue"></i></button>
      <button class="t" aria-label="Redo"><svg><use href="#redo"/></svg></button>
      <button class="drop" aria-label="Redo list"><i class="down gray"></i></button>
      <i class="sep"></i>
      <button class="t" aria-label="Pan"><svg><use href="#hand"/></svg></button>
      <button class="t" aria-label="Zoom realtime"><svg><use href="#zrt"/></svg></button>
      <button class="t more" aria-label="Zoom window"><svg><use href="#zwin"/></svg></button>
      <button class="t" aria-label="Zoom previous"><svg><use href="#zprev"/></svg></button>
      <i class="sep"></i>
      <button class="t" aria-label="Properties"><svg><use href="#prop"/></svg></button>
      <button class="t" aria-label="Design center"><svg><use href="#dcenter"/></svg></button>
      <button class="t" aria-label="Tool palettes"><svg><use href="#palette"/></svg></button>
      <i class="sep"></i>
      <button class="t" aria-label="Help"><svg><use href="#help"/></svg></button>
    </div>
    <div class="bar">
      <i class="grip"></i>
      <button class="t" aria-label="Text style"><svg><use href="#stext"/></svg></button>
      <div class="combo w97"><select aria-label="Text style"><option>Standard</option></select><i class="arrow"><i class="down"></i></i></div>
      <i class="sep"></i>
      <button class="t" aria-label="Dimension style"><svg><use href="#sdim"/></svg></button>
      <div class="combo w97"><select aria-label="Dimension style"><option>ISO-25</option></select><i class="arrow"><i class="down"></i></i></div>
      <i class="sep"></i>
      <button class="t" aria-label="Table style"><svg><use href="#stab"/></svg></button>
      <div class="combo w97"><select aria-label="Table style"><option>Standard</option></select><i class="arrow"><i class="down"></i></i></div>
      <i class="sep"></i>
      <button class="t" aria-label="Leader style"><svg><use href="#slead"/></svg></button>
      <div class="combo w97"><select aria-label="Leader style"><option>Standard</option></select><i class="arrow"><i class="down"></i></i></div>
    </div>
  </div>

  <div class="barrow">
    <div class="bar">
      <i class="grip"></i>
      <button class="t" aria-label="Layers"><svg><use href="#layers"/></svg></button>
      <div class="combo wlayer"><svg class="ic"><use href="#bulb"/></svg><svg class="ic"><use href="#sun"/></svg><svg class="ic"><use href="#frz"/></svg><svg class="ic"><use href="#lock"/></svg><i class="swatch"></i><select aria-label="Layer"><option>0</option></select><i class="arrow"><i class="down"></i></i></div>
      <button class="t" aria-label="Make current"><svg><use href="#lay1"/></svg></button>
      <button class="t" aria-label="Layer previous"><svg><use href="#lay2"/></svg></button>
      <button class="t" aria-label="Layer states"><svg><use href="#lay3"/></svg></button>
    </div>
    <div class="bar">
      <i class="grip wide"></i>
      <div class="combo w148"><i class="swatch sw2"></i><select aria-label="Color"><option>ByLayer</option></select><i class="arrow"><i class="down"></i></i></div>
      <i class="sep"></i>
      <div class="combo w157"><i class="rule r60"></i><select aria-label="Linetype"><option>ByLayer</option></select><i class="arrow"><i class="down"></i></i></div>
      <i class="sep"></i>
      <div class="combo w122"><i class="rule r35"></i><select aria-label="Lineweight"><option>ByLayer</option></select><i class="arrow"><i class="down"></i></i></div>
      <i class="sep"></i>
      <div class="combo w118 off"><select aria-label="Plot style" disabled><option>ByColor</option></select><i class="arrow"><i class="down gray"></i></i></div>
    </div>
  </div>

  <main class="main">
    <aside class="dock">
      <div class="dockbody">
        <div class="dockhead"><i class="hgrip"></i><button class="x" aria-label="Close panel">✖</button></div>
        <button class="toolrow"><svg class="ic"><use href="#line"/></svg><i class="tri"></i>直线</button>
      </div>
      <div class="vtabs"><button class="vt1">修改...</button><button class="vt2">填充...</button></div>
    </aside>
    <div class="vtools">
      <i class="grip h"></i>
      <button class="t" aria-label="Line"><svg><use href="#line"/></svg></button>
      <button class="t" aria-label="Construction line"><svg><use href="#line"/></svg></button>
      <button class="t" aria-label="Polyline"><svg><use href="#arc"/></svg></button>
      <button class="t" aria-label="Polygon"><svg><use href="#ellipse"/></svg></button>
      <button class="t" aria-label="Rectangle"><svg><use href="#copy"/></svg></button>
      <button class="t" aria-label="Arc"><svg><use href="#arc"/></svg></button>
      <button class="t" aria-label="Circle"><svg><use href="#cmark"/></svg></button>
      <button class="t" aria-label="Revision cloud"><svg><use href="#ellipse"/></svg></button>
      <button class="t" aria-label="Spline"><svg><use href="#line"/></svg></button>
      <button class="t" aria-label="Ellipse"><svg><use href="#ellipse"/></svg></button>
      <button class="t" aria-label="Elliptical arc"><svg><use href="#arc"/></svg></button>
      <button class="t" aria-label="Insert block"><svg><use href="#insert"/></svg></button>
      <button class="t" aria-label="Make block"><svg><use href="#copy"/></svg></button>
      <button class="t" aria-label="Point"><svg><use href="#cmark"/></svg></button>
      <button class="t" aria-label="Hatch"><svg><use href="#hatch"/></svg></button>
      <button class="t" aria-label="Region"><svg><use href="#frame"/></svg></button>
      <button class="t" aria-label="Table"><svg><use href="#gridb"/></svg></button>
      <button class="t" aria-label="Grid"><svg><use href="#gridb"/></svg></button>
    </div>
    <section class="work">
      <div class="tabbar">
        <button class="doctab"><svg><use href="#dwg"/></svg>Drawing1.dwg</button>
        <div class="tabnav"><button aria-label="Previous tab"><svg viewBox="0 0 6 9"><path d="M5 .5v8L1 4.500z" fill="none" stroke="#000"/></svg></button><button aria-label="Next tab"><svg viewBox="0 0 6 9"><path d="M1 .5v8l4-4z" fill="none" stroke="#000"/></svg></button><button aria-label="Tab list"><i class="down big"></i></button></div>
      </div>
      <div class="stage">
        <div class="canvas"><svg class="cursor" viewBox="0 0 134 69"><path d="M0 1.500h134M67.500 5v64M63.500 .5h7v6h-7zM63.500 .5l7 6M70.500 .5l-7 6" fill="none" stroke="#fff"/></svg></div>
        <div class="vscroll"><button class="sb" aria-label="Scroll up"><svg viewBox="0 0 9 6"><path d="M1 5l3.500-4L8 5" fill="none" stroke="#ddd"/></svg></button><i class="thumb"></i><button class="sb end" aria-label="Scroll down"><svg viewBox="0 0 9 6"><path d="M1 1h7L4.500 5z" fill="#ddd"/></svg></button></div>
      </div>
      <div class="layouts">
        <button class="ltab">布局2</button>
        <div class="hscroll"><button class="rb" aria-label="Scroll left"><i class="left"></i></button><i class="track"><i class="hthumb"></i></i><button class="rb" aria-label="Scroll right"><i class="right"></i></button></div>
      </div>
    </section>
    <div class="rtools">
      <i class="grip h"></i>
      <button class="t more" aria-label="Sheet"><svg><use href="#sheetgear"/></svg></button>
      <button class="t more" aria-label="Balloon"><svg><use href="#balloon"/></svg></button>
      <button class="t more" aria-label="Axis"><svg><use href="#axis"/></svg></button>
      <button class="t more" aria-label="Curve"><svg><use href="#curve"/></svg></button>
      <button class="t more" aria-label="Fit"><svg><use href="#fit"/></svg></button>
      <button class="t more" aria-label="Roughness"><svg><use href="#rough"/></svg></button>
      <button class="t more" aria-label="Section view"><svg><use href="#aa"/></svg></button>
      <button class="t more" aria-label="Power edit"><svg><use href="#bolt"/></svg></button>
      <button class="t more" aria-label="Text"><svg><use href="#text"/></svg></button>
      <button class="t more" aria-label="Library"><svg><use href="#folder"/></svg></button>
      <button class="t more" aria-label="Parts"><svg><use href="#cap"/></svg></button>
      <button class="t more" aria-label="Delete"><svg><use href="#bin"/></svg></button>
      <button class="t more" aria-label="Cards"><svg><use href="#cards"/></svg></button>
      <button class="t more" aria-label="Manual"><svg><use href="#manual"/></svg></button>
      <i class="divider"></i>
      <i class="grip h"></i>
      <button class="t" aria-label="Erase"><svg><use href="#eraser"/></svg></button>
      <button class="t" aria-label="Copy object"><svg><use href="#cpy2"/></svg></button>
      <button class="t" aria-label="Mirror"><svg><use href="#mirror"/></svg></button>
      <button class="t" aria-label="Offset"><svg><use href="#offset"/></svg></button>
    </div>
  </main>

  <section class="command">
    <div class="cmdgrip"><button class="x" aria-label="Close command line">✖</button><i class="vgrip"></i></div>
    <div class="cmdbox">
      <div class="history"></div>
      <div class="prompt"><label for="cmd">命令：</label><input id="cmd" type="text"><div class="cscroll"><button class="rb" aria-label="Scroll left"><i class="left s"></i></button><i class="cthumb"></i><i class="ctrack"></i><button class="rb" aria-label="Scroll right"><i class="right s"></i></button></div></div>
    </div>
  </section>

  <footer class="status">
    <output class="coords">197.5410,&nbsp; 236.3708, 0.0000</output>
    <button class="st" aria-label="Snap"><svg><use href="#grid2"/></svg></button>
    <button class="st" aria-label="Grid"><svg><use href="#gridb"/></svg></button>
    <button class="st" aria-label="Ortho"><svg><use href="#ortho"/></svg></button>
    <button class="st on" aria-label="Polar"><svg><use href="#polar"/></svg></button>
    <button class="st on" aria-label="Object snap"><svg><use href="#osnap"/></svg></button>
    <button class="st on" aria-label="Object tracking"><svg><use href="#otrack"/></svg></button>
    <button class="st on" aria-label="Dynamic input"><svg><use href="#dyn"/></svg></button>
    <button class="st" aria-label="Lineweight"><svg><use href="#lwt"/></svg></button>
    <button class="st on" aria-label="Cycling"><svg><use href="#cycle"/></svg></button>
    <button class="st on" aria-label="Model"><svg><use href="#model"/></svg></button>
    <div class="stright">
      <button class="st app" aria-label="Application"><svg><use href="#logo"/></svg></button>
      <button class="plain" aria-label="Settings"><svg class="ic"><use href="#cog"/></svg><i class="down"></i></button>
      <button class="st on slim" aria-label="Menu"><i class="down green"></i></button>
      <button class="plain" aria-label="Full screen"><svg class="ic"><use href="#full"/></svg></button>
      <svg class="size" viewBox="0 0 12 12"><path d="M9 1h2v2H9zM5 5h2v2H5zM9 5h2v2H9zM1 9h2v2H1zM5 9h2v2H5zM9 9h2v2H9z" fill="#555"/></svg>
    </div>
  </footer>
</div>

<section class="float f1"><header><h2>ZWCADM常用命令</h2><button class="fx" aria-label="Close"><svg viewBox="0 0 10 10"><path d="M1 1l8 8M9 1L1 9" stroke="#000" stroke-width="1.600"/></svg></button></header><div class="tools">
<button class="t" aria-label="Sheet"><svg><use href="#sheetgear"/></svg></button><button class="t" aria-label="Title block"><svg><use href="#sheetsun"/></svg></button><button class="t" aria-label="Balloon"><svg><use href="#balloon"/></svg></button><i class="sep"></i><button class="t" aria-label="Power edit"><svg><use href="#bolt"/></svg></button><i class="sep"></i><button class="t" aria-label="Fit"><svg><use href="#fit"/></svg></button><button class="t" aria-label="Roughness"><svg><use href="#rough"/></svg></button><button class="t" aria-label="Tolerance"><svg><use href="#hatch"/></svg></button><button class="t" aria-label="Weld"><svg><use href="#weld"/></svg></button><button class="t" aria-label="Text"><svg><use href="#text"/></svg></button><button class="t" aria-label="Fillet"><svg><use href="#fillet"/></svg></button><button class="t" aria-label="Chamfer"><svg><use href="#chamfer"/></svg></button><button class="t" aria-label="Slot"><svg><use href="#slot"/></svg></button></div></section>

<section class="float f2"><header><h2>图纸初始化</h2><button class="fx" aria-label="Close"><svg viewBox="0 0 10 10"><path d="M1 1l8 8M9 1L1 9" stroke="#000" stroke-width="1.600"/></svg></button></header><div class="tools">
<button class="t" aria-label="Sheet"><svg><use href="#sheetgear"/></svg></button><button class="t" aria-label="Title block"><svg><use href="#sheetsun"/></svg></button><button class="t" aria-label="List"><svg><use href="#listsun"/></svg></button><button class="t" aria-label="Frame"><svg><use href="#frame"/></svg></button><i class="sep"></i><button class="t" aria-label="Frame edit"><svg><use href="#frame"/></svg></button><button class="t" aria-label="Scale frame"><svg><use href="#framearrow"/></svg></button><button class="t" aria-label="Title"><svg><use href="#framebr"/></svg></button><button class="t" aria-label="Side"><svg><use href="#framer"/></svg></button><button class="t" aria-label="Code"><svg><use href="#frametl"/></svg></button><button class="t" aria-label="Margin"><svg><use href="#framel"/></svg></button><button class="t" aria-label="Add"><svg><use href="#frameplus"/></svg></button><i class="sep"></i><button class="t" aria-label="Add block"><svg><use href="#frameplus"/></svg></button><i class="sep"></i><button class="t" aria-label="Sheets"><svg><use href="#sheets"/></svg></button><button class="t" aria-label="Notes"><svg><use href="#book"/></svg></button></div></section>

<section class="float f3"><header><h2>序号/明细表</h2><button class="fx" aria-label="Close"><svg viewBox="0 0 10 10"><path d="M1 1l8 8M9 1L1 9" stroke="#000" stroke-width="1.600"/></svg></button></header><div class="tools">
<button class="t" aria-label="Balloon"><svg><use href="#balloon"/></svg></button><button class="t" aria-label="Add table"><svg><use href="#tabplus"/></svg></button><button class="t" aria-label="Edit table"><svg><use href="#tabpen"/></svg></button><button class="t" aria-label="Export table"><svg><use href="#tabup"/></svg></button><i class="sep"></i><button class="t" aria-label="Balloon style"><svg><use href="#balbrush"/></svg></button><button class="t" aria-label="Table edit"><svg><use href="#tabpen2"/></svg></button><button class="t" aria-label="Arrange"><svg><use href="#n123a"/></svg></button><button class="t" aria-label="Merge"><svg><use href="#n123b"/></svg></button><i class="sep"></i><button class="t" aria-label="Hide"><svg><use href="#bulboff"/></svg></button><button class="t" aria-label="Show"><svg><use href="#bulbon"/></svg></button><i class="sep"></i><button class="t" aria-label="Align"><svg><use href="#n123z"/></svg></button><button class="t" aria-label="Add leader"><svg><use href="#plus1"/></svg></button><button class="t" aria-label="Remove leader"><svg><use href="#minus1"/></svg></button></div></section>

<section class="float f4"><header><h2>创建视图</h2><button class="fx" aria-label="Close"><svg viewBox="0 0 10 10"><path d="M1 1l8 8M9 1L1 9" stroke="#000" stroke-width="1.600"/></svg></button></header><div class="tools">
<button class="t" aria-label="Section"><svg><use href="#aa"/></svg></button><button class="t" aria-label="Direction"><svg><use href="#aview"/></svg></button><button class="t" aria-label="Rotated view"><svg><use href="#arot"/></svg></button></div></section>

<section class="float f5b"><header><button class="fx" aria-label="Close"><svg viewBox="0 0 10 10"><path d="M1 1l8 8M9 1L1 9" stroke="#000" stroke-width="1.600"/></svg></button></header><div class="tools">
<button class="t" aria-label="Smart dimension"><svg><use href="#dimblock"/></svg></button><button class="t" aria-label="Datum"><svg><use href="#datum"/></svg></button><button class="t" aria-label="Diameter"><svg><use href="#diam"/></svg></button><button class="t" aria-label="Radius"><svg><use href="#radius"/></svg></button><button class="t" aria-label="Jogged"><svg><use href="#jog"/></svg></button><button class="t" aria-label="Ordinate"><svg><use href="#ord"/></svg></button><button class="t" aria-label="Aligned"><svg><use href="#align"/></svg></button><button class="t" aria-label="Continue"><svg><use href="#cont"/></svg></button><button class="t" aria-label="Baseline"><svg><use href="#base"/></svg></button><button class="t" aria-label="Angular"><svg><use href="#angle"/></svg></button><button class="t" aria-label="Leader"><svg><use href="#leadg"/></svg></button><button class="t" aria-label="Center mark"><svg><use href="#cmark"/></svg></button><button class="t" aria-label="Leader text"><svg><use href="#leada"/></svg></button><button class="t" aria-label="Thickness"><svg><use href="#leadt"/></svg></button></div></section>

<section class="float f5"><header><h2>标注工具</h2><button class="fx" aria-label="Close"><svg viewBox="0 0 10 10"><path d="M1 1l8 8M9 1L1 9" stroke="#000" stroke-width="1.600"/></svg></button></header><div class="tools">
<button class="t" aria-label="Merge dimension"><svg><use href="#dimdown"/></svg></button><button class="t" aria-label="Insert dimension"><svg><use href="#dimdown2"/></svg></button><button class="t" aria-label="Join dimension"><svg><use href="#dimgrn"/></svg></button><button class="t" aria-label="Check dimension"><svg><use href="#dimlens"/></svg></button><button class="t" aria-label="Find"><svg><use href="#bookfind"/></svg></button><button class="t" aria-label="Dimension style"><svg><use href="#sdim"/></svg></button></div></section>

<section class="float f6"><header><h2>符号标注</h2><button class="fx" aria-label="Close"><svg viewBox="0 0 10 10"><path d="M1 1l8 8M9 1L1 9" stroke="#000" stroke-width="1.600"/></svg></button></header><div class="tools">
<button class="t" aria-label="Roughness"><svg><use href="#rough"/></svg></button><button class="t" aria-label="Tolerance"><svg><use href="#hatch"/></svg></button><button class="t" aria-label="Datum"><svg><use href="#cdatum"/></svg></button><button class="t" aria-label="Datum target"><svg><use href="#acenter"/></svg></button><button class="t" aria-label="Target"><svg><use href="#baltarget"/></svg></button><button class="t" aria-label="Taper"><svg><use href="#taper"/></svg></button><button class="t" aria-label="Edge"><svg><use href="#kb"/></svg></button><button class="t" aria-label="Center hole"><svg><use href="#target"/></svg></button><button class="t" aria-label="Slope"><svg><use href="#rod"/></svg></button><button class="t" aria-label="Elevation"><svg><use href="#n322"/></svg></button><button class="t" aria-label="Weld"><svg><use href="#weld"/></svg></button><button class="t" aria-label="Table"><svg><use href="#gridb"/></svg></button></div></section>

<section class="float f7"><header><h2>PartBuilder2</h2><button class="fx" aria-label="Close"><svg viewBox="0 0 10 10"><path d="M1 1l8 8M9 1L1 9" stroke="#000" stroke-width="1.600"/></svg></button></header><div class="tools">
<button class="t" aria-label="Bolt"><svg><use href="#bolt2"/></svg></button><button class="t" aria-label="Bearing"><svg><use href="#bearing"/></svg></button><button class="t" aria-label="Bush"><svg><use href="#bush"/></svg></button><button class="t" aria-label="Rib"><svg><use href="#tri"/></svg></button><button class="t" aria-label="Washer"><svg><use href="#washer"/></svg></button><button class="t" aria-label="Spring"><svg><use href="#spring"/></svg></button><button class="t" aria-label="Steel"><svg><use href="#steel"/></svg></button><button class="t" aria-label="Nut"><svg><use href="#nut"/></svg></button><button class="t" aria-label="Plug"><svg><use href="#plug"/></svg></button><button class="t" aria-label="Beam"><svg><use href="#ibeam"/></svg></button><i class="sep"></i><button class="t" aria-label="Flange"><svg><use href="#flange"/></svg></button><button class="t" aria-label="Coupling"><svg><use href="#gearbox"/></svg></button><button class="t" aria-label="Structure"><svg><use href="#green"/></svg></button><button class="t" aria-label="Hub"><svg><use href="#hub"/></svg></button></div></section>

<div class="mark" aria-hidden="true">
  <svg viewBox="0 0 60 60"><path d="M57 25c1 18-10 31-30 33l3-15c12-2 22-8 27-18z" fill="#f08c1e"/><path d="M8 42c4 4 10 5 18 4l-3 10c-8-3-13-7-15-14z" fill="#f08c1e"/><path d="M1 26C5 8 18 1 32 1c14 0 22 8 25 18-4 14-18 22-34 22C12 41 2 36 1 26z" fill="#1f78b8"/><path d="M6 33l10-12 4-7 8 8 8-10h14l-2 6v14H37V20l-8 12h-7l-2-8-7 12z" fill="#fff"/><path d="M2 33c10 10 38 12 55-9-6 14-16 21-30 22-12 0-21-4-25-13z" fill="#fff"/><circle cx="19" cy="13" r="2" fill="#fff"/></svg>
  <div><b>河东软件园</b><span>www.pc0359.cn</span></div>
</div>
</body>
</html>
```
FILE: styles.css
```css
* { box-sizing: border-box; }
html, body { height: 100%; margin: 0; }
body {
  position: relative;
  overflow: hidden;
  background: #efefef;
  color: #000;
  font: 12px/16px "Open Sans", "Noto Sans CJK SC", sans-serif;
}
button { margin: 0; padding: 0; border: 0; background: none; color: inherit; font: inherit; }
i { font-style: normal; display: block; }
.paints { position: absolute; width: 0; height: 0; }
.sprite { display: none; }
.ic { width: 16px; height: 16px; flex: none; }

/* icon paint */
.s { fill: none; stroke: #6389cc; stroke-width: 1; }
.w { stroke-width: 1.4; }
.f { fill: url(#gb); stroke: #6389cc; }
.fl { fill: #8fb1ec; stroke: #4f79c4; stroke-width: .7; }
.o { fill: none; stroke: #ee9416; stroke-width: 1.3; }
.g { fill: none; stroke: #4aa82e; stroke-width: 1.3; }
.tx { fill: #5079c0; font-family: "Liberation Sans", sans-serif; font-weight: bold; text-anchor: middle; }
.tw { fill: #fff; }
.td { fill: #2f5fb4; }
.tg { fill: #3c9b20; font-family: "Liberation Sans", sans-serif; text-anchor: middle; }

.window {
  display: flex;
  flex-direction: column;
  height: 100vh;
  border: 4px solid #4a4a4a;
  outline: 1px solid #2a2a2a;
  outline-offset: -1px;
}

.titlebar { display: flex; flex: none; align-items: center; height: 22px; padding: 0 2px 0 2px; background: #535353; border-top: 1px solid #2c2c2c; color: #fff; }
.titlebar h1 { flex: 1; margin: 0 0 0 8px; font: 16px/20px "Noto Sans CJK SC", sans-serif; white-space: nowrap; overflow: hidden; }
.titlebar h1 span { font: 13px/20px "Open Sans", sans-serif; }
.winbtns { display: flex; align-self: stretch; border: 1px solid #2a2a2a; border-top: 0; }
.winbtns button { display: grid; place-items: center; width: 26px; background: linear-gradient(#686868, #585858); border-left: 1px solid #2a2a2a; box-shadow: inset 1px 0 #777; }
.winbtns button:first-child { border-left: 0; }
.winbtns .wclose { width: 41px; }
.winbtns svg { width: 14px; height: 12px; }

.menu { display: flex; flex: none; height: 20px; padding-left: 5px; gap: 12px; }
.menu button { line-height: 20px; white-space: nowrap; }
.menu .en { font-size: 11px; }

.barrow { display: flex; flex: none; gap: 1px; height: 28px; }
.bar { display: flex; align-items: center; height: 27px; padding-left: 2px; border: 1px solid; border-color: #fff #a0a0a0 #a0a0a0 #fff; }
.grip { flex: none; width: 8px; height: 24px; margin-right: 1px; background: linear-gradient(90deg, #fff 1px, #efefef 1px 2px, #a0a0a0 2px 3px, #efefef 3px 5px, #fff 5px 6px, #efefef 6px 7px, #a0a0a0 7px 8px); }
.grip.wide { margin-right: 0; }
.grip.h { width: 20px; height: 7px; margin: 2px auto 1px; background: linear-gradient(#fff 1px, #efefef 1px 2px, #a0a0a0 2px 3px, #fff 3px 5px, #efefef 5px 6px, #a0a0a0 6px 7px); }
.sep { flex: none; width: 6px; height: 18px; background: linear-gradient(90deg, transparent 2px, #a0a0a0 2px 3px, #fff 3px 4px, transparent 4px); }
.t { position: relative; display: grid; flex: none; place-items: center; width: 23px; height: 22px; }
.t svg { width: 16px; height: 16px; }
.more::after { content: ""; position: absolute; right: 3px; bottom: 2px; border-left: 5px solid transparent; border-bottom: 5px solid #000; }
.drop { display: grid; place-items: center; width: 13px; height: 22px; }
.down { width: 0; border: 4px solid transparent; border-top-color: #000; border-bottom: 0; }
.down.blue { border-top-color: #4a72b8; border-width: 4px 3px 0; }
.down.gray { border-top-color: #a8a8a8; }
.down.green { border-top-color: #0a8a0a; }
.down.big { border-width: 5px 5px 0; }
.left { border: 4px solid transparent; border-right-color: #000; border-left: 0; }
.right { border: 4px solid transparent; border-left-color: #000; border-right: 0; }
.left.s, .right.s { border-top-width: 3px; border-bottom-width: 3px; }

.combo { display: flex; align-items: center; height: 20px; margin: 0 1px 0 2px; background: #fff; border: 2px solid; border-color: #777 #e4e4e4 #e4e4e4 #777; }
.combo select { flex: 1; min-width: 0; height: 16px; padding: 0 0 0 2px; border: 0; background: none; color: #000; appearance: none; font: 10px/16px "Liberation Mono", monospace; opacity: 1; }
.combo .arrow { display: grid; flex: none; place-items: center; width: 16px; height: 16px; background: #efefef; border: 1px solid; border-color: #fff #777 #777 #fff; box-shadow: 1px 1px #777; }
.combo.off { background: #efefef; }
.combo.off select { padding-left: 7px; color: #a5a5a5; }
.w97 { width: 97px; }
.wlayer { width: 297px; }
.w148 { width: 148px; }
.w157 { width: 157px; }
.w122 { width: 122px; }
.w118 { width: 118px; }
.wlayer .ic { margin-right: 1px; }
.swatch { flex: none; width: 10px; height: 10px; margin-right: 2px; border: 1px solid #000; }
.sw2 { margin-left: 3px; }
.rule { flex: none; height: 1px; margin: 0 3px 0 2px; background: #000; }
.r60 { width: 60px; }
.r35 { width: 35px; }

.main { display: flex; flex: 1; min-height: 0; border-top: 1px solid #a0a0a0; overflow: hidden; }
.dock { display: flex; flex: none; width: 175px; padding-right: 3px; background: #f4f4f4; border-right: 1px solid #a0a0a0; border-top: 1px solid #fff; }
.dockbody { flex: 1; min-width: 0; }
.dockhead { display: flex; align-items: center; gap: 4px; height: 18px; margin-right: 6px; padding-left: 6px; }
.hgrip { flex: 1; height: 7px; border: solid #a0a0a0; border-width: 1px 0; }
.x { width: 11px; height: 11px; background: #e8e8e8; font: 9px/11px "DejaVu Sans", sans-serif; }
.toolrow { display: flex; align-items: center; padding: 2px 0 0 31px; line-height: 30px; }
.toolrow .ic { margin-bottom: 14px; }
.toolrow .tri { margin: 6px 6px 0; border: 5px solid transparent; border-left-color: #000; border-right: 0; }
.vtabs { width: 18px; padding-top: 9px; }
.vtabs button { display: block; width: 18px; font: 12px/18px "Noto Sans CJK SC", sans-serif; writing-mode: vertical-rl; transform: rotate(180deg); }
.vt1 { height: 73px; padding-bottom: 2px; text-align: end; }
.vt2 { height: 195px; padding-top: 12px; background: #969696; text-align: start; }
.vtools { flex: none; width: 26px; border-left: 1px solid #fff; border-right: 1px solid #a0a0a0; margin-right: 1px; }
.work { display: flex; flex: 1; flex-direction: column; min-width: 0; border: solid; border-color: #a0a0a0 #fff; border-width: 0 1px; }
.tabbar { display: flex; flex: none; justify-content: space-between; height: 24px; padding: 1px 6px 0 1px; background: linear-gradient(#bfd8fb, #f4f8ff); border-bottom: 1px solid #888; }
.doctab { display: flex; align-items: center; gap: 6px; height: 22px; padding: 0 8px 0 6px; background: linear-gradient(#ffe6c8, #ffc88c); border: 1px solid #1d3f8f; border-bottom: 0; border-radius: 3px 3px 0 0; font: bold 13px/20px "Open Sans", sans-serif; }
.doctab svg { width: 17px; height: 17px; }
.tabnav { display: flex; align-items: center; gap: 7px; }
.tabnav button { display: grid; place-items: center; }
.tabnav svg { width: 6px; height: 9px; }
.stage { display: flex; flex: 1; min-height: 0; }
.canvas { position: relative; flex: 1; background: #000; }
.cursor { position: absolute; left: 320px; top: 1px; width: 134px; height: 69px; }
.vscroll { display: flex; flex-direction: column; align-items: center; gap: 2px; width: 17px; padding: 2px 0 1px; background: #efefef; }
.sb { display: grid; place-items: center; width: 15px; height: 16px; background: #8f8f8f; border: 1px solid #222; box-shadow: inset 1px 1px #ccc; }
.sb svg { width: 9px; height: 6px; }
.sb.end { margin-top: auto; }
.thumb { width: 15px; height: 14px; background: repeating-linear-gradient(#333 0 1px, #999 1px 3px) center / 9px 7px no-repeat #999; border: 1px solid #222; }
.layouts { display: flex; flex: none; justify-content: space-between; height: 17px; border-bottom: 1px solid #fff; }
.ltab { position: relative; margin-left: 153px; padding: 0 7px; height: 15px; border-bottom: 1px solid #888; line-height: 14px; }
.ltab::before, .ltab::after { content: ""; position: absolute; top: 0; width: 1px; height: 15px; background: #000; transform: skewX(-28deg); right: -4px; }
.ltab::before { left: -4px; right: auto; transform: skewX(28deg); }
.hscroll { display: flex; width: 341px; padding-right: 17px; border-left: 2px solid #a0a0a0; }
.rb { display: grid; flex: none; place-items: center; width: 17px; height: 15px; background: #efefef; border: 1px solid; border-color: #fff #777 #777 #fff; }
.hscroll .rb:first-child { margin-left: 3px; }
.track { flex: 1; background: repeating-conic-gradient(#fff 0 25%, #ececec 0 50%) 0 0 / 2px 2px; height: 15px; }
.hthumb { width: 16px; height: 15px; margin-left: 134px; background: #efefef; border: 1px solid; border-color: #fff #777 #777 #fff; }
.rtools { flex: none; width: 26px; margin-left: 1px; border-left: 1px solid #fff; overflow: hidden; }
.rtools .grip.h { margin: 1px auto; }
.divider { height: 1px; margin: 4px 0 3px; background: #a0a0a0; }

.command { display: flex; flex: none; height: 60px; padding: 6px 7px 0 0; background: #f2f2f2; border-top: 1px solid #a0a0a0; }
.cmdgrip { display: flex; flex-direction: column; align-items: center; gap: 3px; width: 17px; padding: 4px 0 4px 3px; }
.vgrip { flex: 1; width: 7px; border: solid #a0a0a0; border-width: 0 1px; }
.cmdbox { display: flex; flex: 1; flex-direction: column; min-width: 0; background: #fff; border: solid #000; border-width: 2px 0 0 1px; }
.history { height: 34px; border-bottom: 1px solid #a0a0a0; }
.prompt { display: flex; flex: 1; }
.prompt label { padding-left: 1px; font: 12px/18px "Noto Sans CJK SC", sans-serif; }
.prompt input { flex: 1; min-width: 0; border: 0; outline: 0; background: none; font: 10px "Liberation Mono", monospace; }
.cscroll { display: flex; padding-right: 19px; background: #efefef; }
.cscroll .rb { width: 16px; }
.cthumb { width: 17px; height: 15px; background: #efefef; border: 1px solid; border-color: #fff #777 #777 #fff; }
.ctrack { width: 16px; background: #f6f6f6; }

.status { display: flex; flex: none; align-items: center; gap: 4px; height: 24px; padding-left: 5px; border-top: 1px solid #a0a0a0; background: #efefef; }
.coords { flex: none; width: 250px; height: 18px; padding: 2px 0 0 2px; border: 1px solid; border-color: #909090 #909090 #fff; font: 10px/15px "Liberation Mono", monospace; white-space: nowrap; }
.st { display: grid; flex: none; place-items: center; width: 20px; height: 18px; border: 1px solid; border-color: #fff #909090 #909090 #fff; }
.st.on { border-color: #000 #fff #fff #000; background: #f6f6f6; }
.st svg { width: 16px; height: 16px; }
.stright { display: flex; align-items: center; gap: 5px; margin-left: auto; padding-right: 1px; }
.st.app { width: 23px; border-color: #909090 #fff #fff #909090; }
.st.slim { width: 14px; margin-left: 2px; }
.plain { display: flex; align-items: center; gap: 4px; }
.size { width: 12px; height: 12px; align-self: end; margin-left: 3px; }

/* floating palettes */
.float { position: absolute; left: 21px; padding: 5px 1px 1px; background: linear-gradient(#fff 6px, #efefef 6px); border: 1px solid #9a9a9a; box-shadow: 1px 4px 12px rgba(0, 0, 0, .4); }
.float header { display: flex; justify-content: space-between; height: 23px; margin: 0 -1px; padding: 2px 3px 0; background: #c0c0c0; color: #fff; }
.float h2 { flex: 1; width: 0; margin: 0; overflow: hidden; font: 12px/15px "Open Sans", "Noto Sans CJK SC", sans-serif; white-space: nowrap; }
.fx { display: grid; flex: none; place-items: center; width: 20px; height: 18px; margin-left: auto; background: #efefef; border: 1px solid; border-color: #fff #222 #222 #fff; box-shadow: inset -1px -1px #999; }
.fx svg { width: 10px; height: 10px; }
.tools { display: flex; align-items: center; height: 28px; padding-right: 2px; }
.f1 { top: 140px; }
.f2 { top: 200px; }
.f3 { top: 260px; }
.f4 { top: 320px; }
.f5, .f5b { top: 380px; }
.f5b { left: 159px; }
.f6 { top: 440px; }
.f7 { top: 500px; }

/* translucent site mark */
.mark { position: absolute; left: 4px; top: 10px; display: flex; gap: 2px; opacity: .8; pointer-events: none; }
.mark svg { width: 60px; height: 60px; }
.mark div { display: flex; flex-direction: column; padding-top: 6px; }
.mark b { color: #2f8fdc; font: bold 27px/32px "Noto Sans CJK SC", sans-serif; opacity: .85; }
.mark span { color: #3f9e3f; font: bold 20px/18px "Liberation Serif", serif; }
```
